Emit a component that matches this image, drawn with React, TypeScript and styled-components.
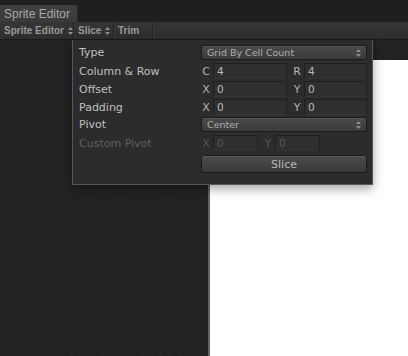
import React from 'react';
import styled, { createGlobalStyle } from 'styled-components';

const Global = createGlobalStyle`
  html, body { margin: 0; padding: 0; background: #232323; }
  body { font-family: "DejaVu Sans", "Liberation Sans", sans-serif; }
`;

const Window = styled.div`
  width: 408px;
  height: 356px;
  display: flex;
  flex-direction: column;
  position: relative;
  overflow: hidden;
  background: #232323;
`;

const TabStrip = styled.div`
  height: 22px;
  display: flex;
  align-items: flex-end;
  background: #1f1f1f;
  box-sizing: border-box;
`;

const Tab = styled.div`
  height: 17px;
  width: 78px;
  padding-left: 4px;
  box-sizing: border-box;
  display: flex;
  align-items: center;
  background: linear-gradient(#404040, #393939);
  border-top-right-radius: 4px;
  border-right: 1px solid #2a2a2a;
  color: #a8a8a8;
  font-family: "Liberation Sans", sans-serif;
  font-size: 12px;
`;

const Toolbar = styled.div`
  height: 18px;
  display: flex;
  background: linear-gradient(#363636, #2d2d2d);
  border-bottom: 1px solid #1a1a1a;
  box-sizing: border-box;
`;

const ToolItem = styled.div<{ $w: number }>`
  width: ${({ $w }) => $w}px;
  padding-left: 4px;
  box-sizing: border-box;
  display: flex;
  align-items: center;
  gap: 4px;
  color: #999999;
  font-family: "Liberation Sans", sans-serif;
  font-weight: bold;
  font-size: 10px;
  border-right: 1px solid #222;
  box-shadow: 1px 0 0 #3a3a3a;
`;

const Arrows = styled.svg`
  width: 5px;
  height: 8px;
  fill: #8e8e8e;
`;

const Workspace = styled.div`
  flex: 1;
  display: flex;
  padding-top: 20px;
  padding-left: 208px;
  background: #232323 repeating-linear-gradient(45deg, #232323 0 6px, #1f1f1f 6px 7px);
`;

const Canvas = styled.div`
  flex: 1;
  background: #ffffff;
  border-left: 2px solid #626262;
`;

const Panel = styled.div`
  position: absolute;
  left: 72px;
  top: 40px;
  width: 301px;
  height: 145px;
  box-sizing: border-box;
  background: #2c2c2c;
  border: 1px solid #575757;
  border-top: none;
  box-shadow: 0 4px 10px rgba(0, 0, 0, 0.35);
  padding: 5px 5px 0 6px;
  display: flex;
  flex-direction: column;
  gap: 3px;
`;

const Row = styled.div`
  height: 15px;
  display: grid;
  grid-template-columns: 122px 1fr;
  align-items: center;
`;

const Label = styled.div<{ $disabled?: boolean }>`
  color: ${({ $disabled }) => ($disabled ? '#5f5f5f' : '#c0c0c0')};
  font-size: 11px;
  white-space: nowrap;
`;

const Select = styled.div`
  height: 15px;
  box-sizing: border-box;
  border-radius: 3px;
  border: 1px solid #1b1b1b;
  background: linear-gradient(#4a4a4a, #3b3b3b);
  box-shadow: inset 0 1px 0 #555;
  padding: 0 5px 0 5px;
  display: flex;
  align-items: center;
  justify-content: space-between;
  color: #b0b0b0;
  font-size: 9.5px;
`;

const Pair = styled.div<{ $narrow?: boolean }>`
  display: grid;
  grid-template-columns: ${({ $narrow }) => ($narrow ? '57px 57px' : '86px 1fr')};
  column-gap: 5px;
  height: 16px;
`;

const Field = styled.div`
  display: flex;
  align-items: center;
  gap: 2px;
`;

const Axis = styled.span<{ $disabled?: boolean }>`
  width: 10px;
  color: ${({ $disabled }) => ($disabled ? '#555555' : '#b4b4b4')};
  font-size: 11px;
  text-align: center;
`;

const Input = styled.div<{ $disabled?: boolean }>`
  flex: 1;
  height: 16px;
  box-sizing: border-box;
  background: #2f2f2f;
  border: 1px solid #1f1f1f;
  border-bottom-color: #363636;
  padding-left: 3px;
  display: flex;
  align-items: center;
  color: ${({ $disabled }) => ($disabled ? '#585858' : '#bababa')};
  font-size: 10.5px;
`;

const SliceButton = styled.div`
  margin-top: 2px;
  margin-left: 122px;
  height: 18px;
  box-sizing: border-box;
  border-radius: 3px;
  border: 1px solid #1b1b1b;
  background: linear-gradient(#4c4c4c, #3a3a3a);
  box-shadow: inset 0 1px 0 #585858;
  display: flex;
  align-items: center;
  justify-content: center;
  color: #bababa;
  font-size: 11px;
`;

const UpDown = () => (
  <Arrows viewBox="0 0 5 8">
    <polygon points="0,3 2.5,0 5,3" />
    <polygon points="0,5 2.5,8 5,5" />
  </Arrows>
);

const NumberPair = ({ a, b, va, vb, disabled, narrow }: { a: string; b: string; va: string; vb: string; disabled?: boolean; narrow?: boolean }) => (
  <Pair $narrow={narrow}>
    <Field>
      <Axis $disabled={disabled}>{a}</Axis>
      <Input $disabled={disabled}>{va}</Input>
    </Field>
    <Field>
      <Axis $disabled={disabled}>{b}</Axis>
      <Input $disabled={disabled}>{vb}</Input>
    </Field>
  </Pair>
);

export default function App() {
  return (
    <Window>
      <Global />
      <TabStrip>
        <Tab>Sprite Editor</Tab>
      </TabStrip>
      <Toolbar>
        <ToolItem $w={74}>Sprite Editor <UpDown /></ToolItem>
        <ToolItem $w={40}>Slice <UpDown /></ToolItem>
        <ToolItem $w={39}>Trim</ToolItem>
      </Toolbar>
      <Workspace>
        <Canvas />
      </Workspace>

      <Panel>
        <Row>
          <Label>Type</Label>
          <Select>Grid By Cell Count <UpDown /></Select>
        </Row>
        <Row>
          <Label>Column &amp; Row</Label>
          <NumberPair a="C" b="R" va="4" vb="4" />
        </Row>
        <Row>
          <Label>Offset</Label>
          <NumberPair a="X" b="Y" va="0" vb="0" />
        </Row>
        <Row>
          <Label>Padding</Label>
          <NumberPair a="X" b="Y" va="0" vb="0" />
        </Row>
        <Row>
          <Label>Pivot</Label>
          <Select>Center <UpDown /></Select>
        </Row>
        <Row>
          <Label $disabled>Custom Pivot</Label>
          <NumberPair a="X" b="Y" va="0" vb="0" disabled narrow />
        </Row>
        <SliceButton>Slice</SliceButton>
      </Panel>
    </Window>
  );
}
